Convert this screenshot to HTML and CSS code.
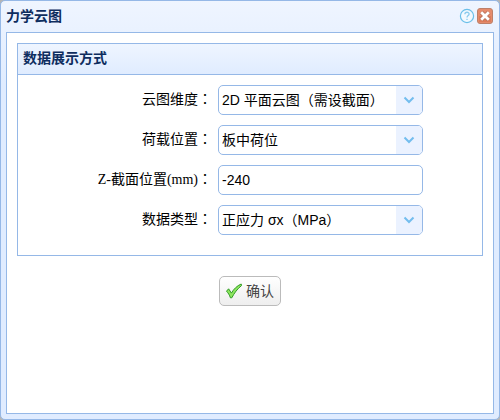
FILE: index.html
```html
<!DOCTYPE html>
<html>
<head>
<meta charset="utf-8">
<title>力学云图</title>
<link rel="stylesheet" href="styles.css">
</head>
<body>
<main class="window">
  <header class="window-header">
    <h1 class="title">力学云图</h1>
    <div class="tools">
      <button class="tool" type="button" aria-label="帮助">
        <svg width="16" height="16" viewBox="0 0 16 16" fill="none">
          <circle cx="8" cy="8" r="6.6" fill="#f2f9ff" stroke="#6bbfe9" stroke-width="1.2"/>
          <path d="M5.9 6.3C5.9 3.5 10.2 3.7 10.1 6.1C10 7.6 8 7.7 8 9.6M8 10.8V12" stroke="#8acbee" stroke-width="1.3"/>
        </svg>
      </button>
      <button class="tool" type="button" aria-label="关闭">
        <svg width="16" height="16" viewBox="0 0 16 16" fill="none">
          <rect x="0.5" y="0.5" width="15" height="15" rx="2.5" fill="#e58b6c" stroke="#bd8069"/>
          <path d="M2 8H14V14H2Z" fill="#dc7d5c"/>
          <path d="M4.2 4.2L11.8 11.8M11.8 4.2L4.2 11.8" stroke="#b87158" stroke-width="4.4"/>
          <path d="M4.2 4.2L11.8 11.8M11.8 4.2L4.2 11.8" stroke="#fff" stroke-width="2.8"/>
        </svg>
      </button>
    </div>
  </header>
  <form class="window-body">
    <section class="panel">
      <h2 class="title panel-header">数据展示方式</h2>
      <div class="fields">
        <label class="label" for="dimension">云图维度：</label>
        <div class="combo">
          <select class="control" id="dimension"><option>2D 平面云图（需设截面）</option></select>
          <svg class="arrow" viewBox="0 0 26 28" fill="none"><path d="M8.5 11.5L13 16L17.5 11.5" stroke="#73bdee" stroke-width="2"/></svg>
        </div>
        <label class="label" for="load">荷载位置：</label>
        <div class="combo">
          <select class="control" id="load"><option>板中荷位</option></select>
          <svg class="arrow" viewBox="0 0 26 28" fill="none"><path d="M8.5 11.5L13 16L17.5 11.5" stroke="#73bdee" stroke-width="2"/></svg>
        </div>
        <label class="label" for="section">Z-截面位置(mm)：</label>
        <input class="control" id="section" type="text" value="-240">
        <label class="label" for="type">数据类型：</label>
        <div class="combo">
          <select class="control" id="type"><option>正应力 σx（MPa）</option></select>
          <svg class="arrow" viewBox="0 0 26 28" fill="none"><path d="M8.5 11.5L13 16L17.5 11.5" stroke="#73bdee" stroke-width="2"/></svg>
        </div>
      </div>
    </section>
    <button class="confirm" type="button">
      <svg width="16" height="16" viewBox="0 0 16 16">
        <path d="M.5 8.2L2.6 5.8L5.4 10.1C7.7 6.1 11 2.8 15.2 1L15.5 2.6C11.4 5.8 8.3 10 5.8 14.8H4.4C3.6 12 2.2 10 .5 8.2Z" fill="#8ee65f" stroke="#2f9a25"/>
      </svg>
      <span>确认</span>
    </button>
  </form>
</main>
</body>
</html>
```
FILE: styles.css
```css
* {
  box-sizing: border-box;
}

body {
  margin: 0;
  background: #b5b5b5;
  font-family: "Liberation Serif", "Noto Sans CJK TC", serif;
  font-size: 14px;
  color: #000;
}

.window {
  display: flex;
  flex-direction: column;
  min-height: 100vh;
  padding: 0 5px 5px;
  border: 1px solid #95b8e7;
  border-radius: 5px;
  background: linear-gradient(to bottom, #eff5ff 0, #e0ecff 20%);
}

.window-header {
  display: flex;
  align-items: center;
  justify-content: space-between;
  height: 31px;
  padding: 0 1px 2px 0;
}

.title {
  margin: 0;
  font-family: "Liberation Sans", "Noto Sans CJK SC", sans-serif;
  font-size: 14px;
  font-weight: bold;
  line-height: 20px;
  color: #0e2d5f;
}

.tools {
  display: flex;
  gap: 2px;
}

.tool {
  width: 16px;
  height: 16px;
  padding: 0;
  border: 0;
  background: none;
}

.tool svg {
  display: block;
}

.window-body {
  display: flex;
  flex: 1;
  flex-direction: column;
  align-items: center;
  gap: 20px;
  padding: 10px;
  border: 1px solid #95b8e7;
  background: #fff;
}

.panel {
  align-self: stretch;
  border: 1px solid #95b8e7;
}

.panel-header {
  padding: 4px 5px 6px;
  border-bottom: 1px solid #95b8e7;
  background: linear-gradient(to bottom, #eff5ff, #e0ecff);
}

.fields {
  display: grid;
  grid-template-columns: 1fr 205px;
  gap: 10px 6px;
  align-items: center;
  padding: 10px 59px 20px 0;
}

.label {
  line-height: 20px;
  text-align: right;
}

.combo {
  position: relative;
}

.control {
  display: block;
  width: 100%;
  height: 30px;
  padding: 0 3px;
  border: 1px solid #95b8e7;
  border-radius: 5px;
  appearance: none;
  background: #fff;
  font-family: "Liberation Sans", "Noto Sans CJK SC", sans-serif;
  font-size: 14px;
  color: #000;
}

.arrow {
  position: absolute;
  top: 1px;
  right: 1px;
  width: 26px;
  height: 28px;
  border-radius: 0 4px 4px 0;
  background: #ebf2ff;
  pointer-events: none;
}

.confirm {
  display: flex;
  align-items: center;
  gap: 4px;
  height: 30px;
  padding: 0 6px;
  border: 1px solid #bbb;
  border-radius: 5px;
  background: linear-gradient(to bottom, #fff, #eee);
  font-family: "Liberation Sans", "Noto Sans CJK SC", sans-serif;
  font-size: 14px;
  line-height: 20px;
  color: #444;
}
```
